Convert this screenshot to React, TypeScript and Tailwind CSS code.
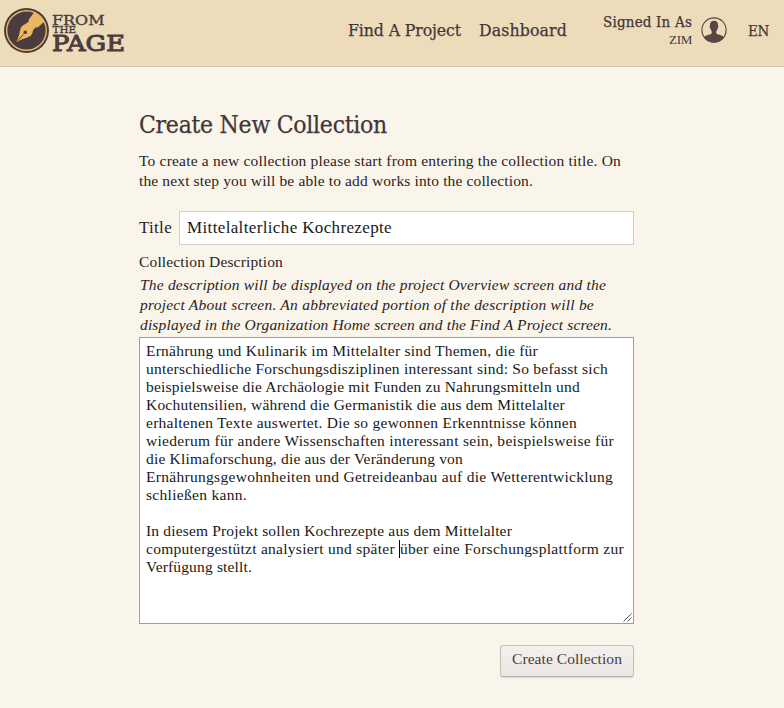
import { useLayoutEffect, useRef } from 'react';

const serif = "font-['Liberation_Serif',serif]";
const slab = "font-['DejaVu_Serif_Condensed','DejaVu_Serif',serif] [font-stretch:condensed] [-webkit-text-stroke:0.25px_currentColor]";

type FitProps = { text: string; width: number; className?: string };

// Tracks a single line of text so that it fills the given measure.
function Fit({ text, width, className = '' }: FitProps) {
  const ref = useRef<HTMLSpanElement>(null);
  useLayoutEffect(() => {
    const el = ref.current;
    if (!el) return;
    el.style.letterSpacing = '0px';
    const natural = el.getBoundingClientRect().width;
    el.style.letterSpacing = `${(width - natural) / text.length}px`;
  }, [text, width]);
  return (
    <span ref={ref} className={`inline-block whitespace-pre ${className}`}>
      {text}
    </span>
  );
}

const intro = [
  { text: 'To create a new collection please start from entering the collection title. On', width: 482 },
  { text: 'the next step you will be able to add works into the collection.', width: 394 },
];

const hint = [
  { text: 'The description will be displayed on the project Overview screen and the', width: 466 },
  { text: 'project About screen. An abbreviated portion of the description will be', width: 454 },
  { text: 'displayed in the Organization Home screen and the Find A Project screen.', width: 472 },
];

const description = [
  { text: 'Ernährung und Kulinarik im Mittelalter sind Themen, die für', width: 392 },
  { text: 'unterschiedliche Forschungsdisziplinen interessant sind: So befasst sich', width: 462 },
  { text: 'beispielsweise die Archäologie mit Funden zu Nahrungsmitteln und', width: 434 },
  { text: 'Kochutensilien, während die Germanistik die aus dem Mittelalter', width: 419 },
  { text: 'erhaltenen Texte auswertet. Die so gewonnen Erkenntnisse können', width: 431 },
  { text: 'wiederum für andere Wissenschaften interessant sein, beispielsweise für', width: 468 },
  { text: 'die Klimaforschung, die aus der Veränderung von', width: 317 },
  { text: 'Ernährungsgewohnheiten und Getreideanbau auf die Wetterentwicklung', width: 467 },
  { text: 'schließen kann.', width: 101 },
];

function Logo() {
  return (
    <svg width="128" height="58" viewBox="0 0 128 58" className="block">
      <circle cx="26.5" cy="30.5" r="22.5" fill="#4b3d3f" />
      <circle cx="26.5" cy="30.5" r="19.8" fill="none" stroke="#e8b862" strokeWidth="1.4" />
      <path d="M34 12.4C38.500 14.200 42.300 17.600 44.300 21.800L38 27.200L35.400 27.500L33 30.200C32.800 33 31.800 35 29.800 36.300C26 38.500 21.500 39 17 42L16.400 41.400C19 37.500 19.200 33.500 20.300 29.500C20.900 27 22.500 25 25.500 24L28.700 21.800L28.800 19.500Z" fill="#e8b862" />
      <path d="M16.700 41.700L24.500 33.200" stroke="#4b3d3f" strokeWidth=".8" />
      <circle cx="25.300" cy="32.300" r="1.700" fill="#4b3d3f" />
      <g fill="#4b3d3f" stroke="#4b3d3f" className="font-['DejaVu_Serif',serif]">
        <text x="52" y="24.7" fontSize="13.5" strokeWidth=".4" textLength="52.500" lengthAdjust="spacingAndGlyphs">FROM</text>
        <text x="52.500" y="33.3" fontSize="8.500" strokeWidth=".35" textLength="23.500" lengthAdjust="spacingAndGlyphs">THE</text>
        <text x="52" y="51.2" fontSize="21.8" strokeWidth="1" textLength="73" lengthAdjust="spacingAndGlyphs">PAGE</text>
      </g>
    </svg>
  );
}

function Avatar() {
  return (
    <svg width="26" height="26" viewBox="0 0 26 26" className="block">
      <circle cx="13" cy="13" r="12.1" fill="none" stroke="#584544" strokeWidth="1.1" />
      <path d="M13 3.800c-3 0-4.200 1.800-4 4.600-.7.500-.3 2.600.5 3 .2 1.300.6 2.200 1.200 2.900v2.200c-2 1.500-6 1.300-8 4A12.400 12.400 0 0 0 13 25.400a12.400 12.400 0 0 0 10.300-4.900c-2-2.700-6-2.500-8-4v-2.200c.6-.7 1-1.600 1.200-2.900.8-.4 1.200-2.500.5-3 .2-2.800-1-4.600-4-4.600Z" fill="#584544" />
    </svg>
  );
}

export default function App() {
  return (
    <div className={`h-[708px] w-[784px] overflow-hidden bg-[#faf5ea] text-[#2d2223] ${serif}`}>
      <header className="flex h-[67px] border-b border-[#d0c5bd] bg-[#eddcba] text-[#433639]">
        <Logo />
        <nav className={`ml-[220px] flex pt-[18px] text-[17.5px] leading-6 ${slab}`}>
          <a className="w-[131px]"><Fit text="Find A Project" width={113} /></a>
          <a className="w-[88px]"><Fit text="Dashboard" width={88} /></a>
        </nav>
        <div className={`ml-9 flex w-[89px] flex-col items-end pt-[13px] ${slab}`}>
          <Fit text="Signed In As" width={89} className="text-[15px] leading-[19px]" />
          <Fit text="ZIM" width={23} className="font-['Liberation_Serif',serif] text-[13px] leading-[15px] [-webkit-text-stroke:0]" />
        </div>
        <div className="ml-[9px] pt-[17px]"><Avatar /></div>
        <div className={`ml-[21px] pt-[19px] text-[15px] leading-6 ${slab}`}><Fit text="EN" width={21} /></div>
      </header>

      <main className="ml-[139px] flex w-[495px] flex-col pt-[42px]">
        <h1 className={`h-[42px] text-[24.5px] leading-[32px] text-[#433639] ${slab}`}>
          <Fit text="Create New Collection" width={248} />
        </h1>
        <div className="flex h-[60px] flex-col items-start text-[15.5px] leading-5">
          {intro.map((line) => <Fit key={line.text} {...line} />)}
        </div>
        <div className="flex h-[34px] items-center">
          <label className="w-10 text-[17px]"><Fit text="Title" width={33} /></label>
          <div className="flex h-[34px] w-[455px] items-center border border-[#d2cec5] bg-white pl-[7px] text-[17px] text-[#191919]">
            <Fit text="Mittelalterliche Kochrezepte" width={205} />
          </div>
        </div>
        <label className="mt-[7px] h-[23px] text-[15.5px] leading-5">
          <Fit text="Collection Description" width={144} />
        </label>
        <div className="flex flex-col items-start pl-px text-[15.5px] italic leading-5">
          {hint.map((line) => <Fit key={line.text} {...line} />)}
        </div>
        <div className="relative mt-[2px] flex h-[287px] flex-col items-start border border-[#a39d96] bg-white pl-[6px] pt-[4px] text-[15.5px] leading-[18px] text-[#191919]">
          {description.map((line) => <Fit key={line.text} {...line} />)}
          <div className="h-[18px]" />
          <Fit text="In diesem Projekt sollen Kochrezepte aus dem Mittelalter" width={366} />
          <div className="flex h-[18px]">
            <Fit text="computergestützt analysiert und später " width={253} />
            <span className="h-[18px] w-px bg-black" />
            <Fit text="über eine Forschungsplattform zur" width={224} />
          </div>
          <Fit text="Verfügung stellt." width={106} />
          <svg className="absolute bottom-0 right-0" width="11" height="11" viewBox="0 0 11 11" fill="none" stroke="#555" strokeWidth="1">
            <path d="M1.500 9.500 9.500 1.500M5.500 9.500 9.500 5.500" />
          </svg>
        </div>
        <button className="mt-[21px] flex h-8 w-[134px] justify-center self-end rounded-[3px] border border-[#c5beb9] border-b-[#b5aea9] bg-linear-to-b from-[#f3f0ee] to-[#ece7e5] pt-[3px] text-[15.5px] leading-5 text-[#493d3d] shadow-[0_1px_1px_#ded8cf]">
          <Fit text="Create Collection" width={110} />
        </button>
      </main>
    </div>
  );
}
